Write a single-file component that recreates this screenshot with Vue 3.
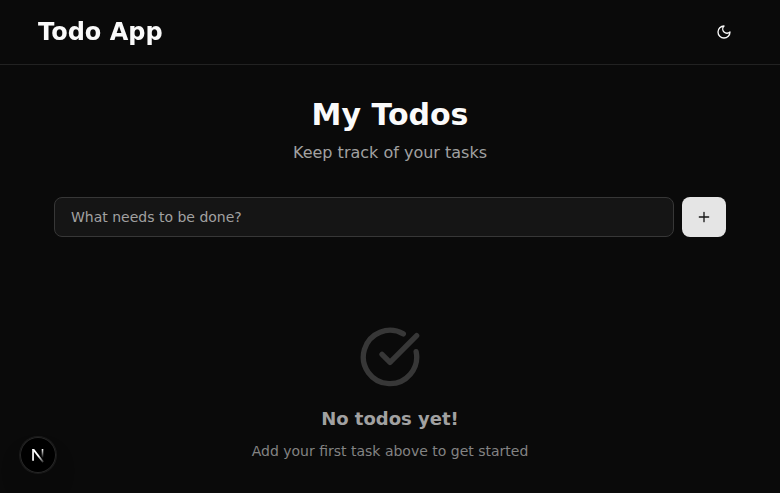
<script setup>
import { ref } from 'vue'

const draft = ref('')
</script>

<template>
  <div class="page">
    <header class="header">
      <span class="brand">Todo App</span>
      <button class="theme" type="button" aria-label="Toggle theme">
        <svg class="icon" viewBox="0 0 24 24">
          <path d="M12 3a6 6 0 0 0 9 9 9 9 0 1 1-9-9Z" />
        </svg>
      </button>
    </header>

    <main class="main">
      <h1 class="title">My Todos</h1>
      <p class="subtitle">Keep track of your tasks</p>

      <form class="form" @submit.prevent>
        <input v-model="draft" class="input" placeholder="What needs to be done?" />
        <button class="add" type="submit" aria-label="Add">
          <svg class="icon" viewBox="0 0 24 24">
            <path d="M5 12h14M12 5v14" />
          </svg>
        </button>
      </form>

      <section class="empty">
        <svg class="check" viewBox="0 0 24 24">
          <path d="M21.801 10A10 10 0 1 1 17 3.335" />
          <path d="m9 11 3 3L22 4" />
        </svg>
        <h2 class="empty-title">No todos yet!</h2>
        <p class="empty-text">Add your first task above to get started</p>
      </section>
    </main>

    <div class="badge">
      <svg class="mark" viewBox="0 0 36 36">
        <defs>
          <linearGradient id="stem" x1="0" y1="12" x2="0" y2="21" gradientUnits="userSpaceOnUse">
            <stop offset="0" stop-color="#fff" />
            <stop offset="1" stop-color="#fff" stop-opacity="0" />
          </linearGradient>
          <linearGradient id="diagonal" x1="18.5" y1="19" x2="23.5" y2="25.5" gradientUnits="userSpaceOnUse">
            <stop offset="0" stop-color="#fff" />
            <stop offset="1" stop-color="#fff" stop-opacity="0.15" />
          </linearGradient>
        </defs>
        <path d="M12.2 12h2l9.6 12.5-1.3 1.2-8.7-11.3z" fill="url(#diagonal)" />
        <path d="M12.2 12h1.7v11.8h-1.7z" fill="#fff" />
        <path d="M21.7 12h1.6v9h-1.6z" fill="url(#stem)" />
      </svg>
    </div>
  </div>
</template>

<style>
body {
  background: #0a0a0a;
  overflow: hidden;
}
</style>

<style scoped>
.page {
  height: 493px;
  overflow: hidden;
  background: #0a0a0a;
  color: #fafafa;
  font-family: "DejaVu Sans", sans-serif;
}
.header {
  display: flex;
  align-items: center;
  justify-content: space-between;
  height: 64px;
  padding: 0 38px;
  border-bottom: 1px solid #222;
  will-change: transform;
}
.brand {
  font-size: 24px;
  line-height: 32px;
  font-weight: 700;
}
.theme {
  display: flex;
  align-items: center;
  justify-content: center;
  width: 36px;
  height: 36px;
  padding: 0;
  border: 0;
  background: none;
  color: #fafafa;
}
.icon {
  width: 16px;
  height: 16px;
}
.icon,
.check {
  fill: none;
  stroke: currentColor;
  stroke-width: 2;
  stroke-linecap: round;
  stroke-linejoin: round;
}
.main {
  max-width: 672px;
  margin: 0 auto;
  padding-top: 32px;
  text-align: center;
}
.title {
  margin: 0 0 8px;
  font-size: 30px;
  line-height: 36px;
  font-weight: 700;
}
.subtitle {
  margin: 0 0 32px;
  font-size: 16px;
  line-height: 24px;
  color: #a1a1a1;
}
.form {
  display: flex;
  gap: 8px;
}
.input {
  flex: 1;
  box-sizing: border-box;
  height: 40px;
  padding: 4px 16px;
  border: 1px solid #373737;
  border-radius: 8px;
  outline: 0;
  background: #151515;
  color: #fafafa;
  font: 14px/20px "DejaVu Sans", sans-serif;
}
.input::placeholder {
  color: #a1a1a1;
}
.add {
  display: flex;
  align-items: center;
  justify-content: center;
  width: 44px;
  height: 40px;
  padding: 0;
  border: 0;
  border-radius: 8px;
  background: #e5e5e5;
  color: #171717;
}
.empty {
  padding-top: 88px;
}
.check {
  display: block;
  width: 64px;
  height: 64px;
  margin: 0 auto 16px;
  color: #373737;
}
.empty-title {
  margin: 0 0 8px;
  font-size: 18px;
  line-height: 28px;
  font-weight: 700;
  color: #a1a1a1;
}
.empty-text {
  margin: 0;
  font-size: 14px;
  line-height: 20px;
  color: #838383;
}
.badge {
  position: fixed;
  left: 20px;
  bottom: 20px;
  width: 36px;
  height: 36px;
  border-radius: 50%;
  background: #000;
  box-shadow: 0 0 0 1px #1b1b1b, inset 0 0 0 1px #272727, 0 16px 32px -8px rgba(0, 0, 0, 0.24);
}
.mark {
  display: block;
  width: 36px;
  height: 36px;
}
</style>
